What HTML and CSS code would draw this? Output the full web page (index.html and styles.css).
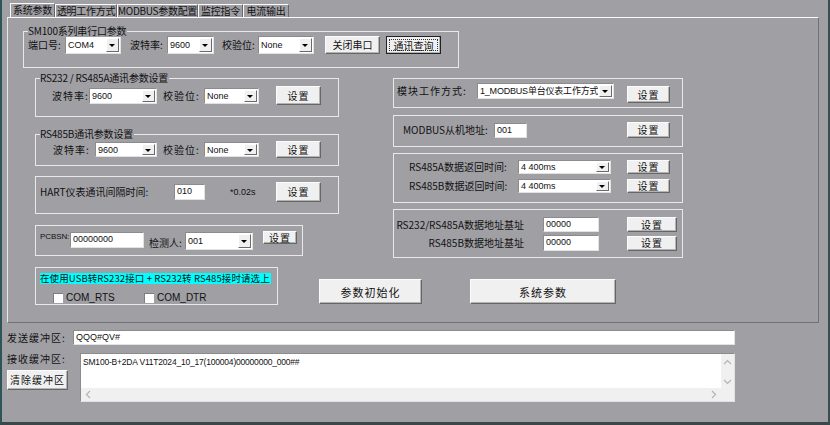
FILE: index.html
```html
<!DOCTYPE html>
<html lang="zh-CN">

<head>
    <meta charset="UTF-8">
    <title>SM100 参数设置</title>
    <link rel="stylesheet" href="styles.css">
</head>

<body>
    <div class="window">
        <div class="tabs">
            <div class="tab t1 active">系统参数</div>
            <div class="tab t2">透明工作方式</div>
            <div class="tab t3">MODBUS参数配置</div>
            <div class="tab t4">监控指令</div>
            <div class="tab t5">电流输出</div>
        </div>

        <div class="panel">
            <div class="group g-port">
                <span class="legend">SM100系列串行口参数</span>
                <div class="row">
                    <span class="lbl w37">端口号:</span>
                    <div class="combo w56 h18"><span class="val">COM4</span><span class="drop"></span></div>
                    <span class="lbl ml9 w37">波特率:</span>
                    <div class="combo w47 h18"><span class="val">9600</span><span class="drop"></span></div>
                    <span class="lbl ml8 w36">校验位:</span>
                    <div class="combo w56 h18"><span class="val">None</span><span class="drop"></span></div>
                    <button class="btn ml11 w55 h18">关闭串口</button>
                    <button class="btn focus ml6 w55 h18"><span>通讯查询</span></button>
                </div>
            </div>

            <div class="main">
                <div class="col-left">
                    <div class="group g-rs232">
                        <span class="legend">RS232 / RS485A通讯参数设置</span>
                        <div class="row">
                            <span class="lbl sp w37">波特率:</span>
                            <div class="combo w68 h16"><span class="val">9600</span><span class="drop"></span></div>
                            <span class="lbl sp ml6 w41">校验位:</span>
                            <div class="combo w55 h16"><span class="val">None</span><span class="drop"></span></div>
                            <button class="btn sp ml17 w45 h19">设置</button>
                        </div>
                    </div>

                    <div class="group g-485b">
                        <span class="legend">RS485B通讯参数设置</span>
                        <div class="row">
                            <span class="lbl sp w42">波特率:</span>
                            <div class="combo w62 h15"><span class="val">9600</span><span class="drop"></span></div>
                            <span class="lbl sp ml6 w41">校验位:</span>
                            <div class="combo w55 h15"><span class="val">None</span><span class="drop"></span></div>
                            <button class="btn sp ml17 w45 h17">设置</button>
                        </div>
                    </div>

                    <div class="group g-hart">
                        <div class="row">
                            <span class="lbl w134">HART仪表通讯间隔时间:</span>
                            <div class="edit w31 h16">010</div>
                            <span class="unit">*0.02s</span>
                            <button class="btn sp w45 h20">设置</button>
                        </div>
                    </div>

                    <div class="group g-pcb">
                        <div class="row top">
                            <span class="lbl w30 lat">PCBSN:</span>
                            <div class="edit w74 h16 mt1">00000000</div>
                            <span class="lbl ml5 w36 mt6">检测人:</span>
                            <div class="combo w68 h18 mt1"><span class="val">001</span><span class="drop"></span></div>
                            <button class="btn sp ml10 w34 h13">设置</button>
                        </div>
                    </div>
                </div>

                <div class="col-right">
                    <div class="group g-mode">
                        <div class="row top">
                            <span class="lbl sp w80 mt2">模块工作方式:</span>
                            <div class="combo w137 h16"><span class="val mode">1_MODBUS单台仪表工作方式</span><span class="drop"></span></div>
                            <button class="btn sp ml13 w43 h17 mt3">设置</button>
                        </div>
                    </div>

                    <div class="group g-slave">
                        <div class="row">
                            <span class="lbl w91">MODBUS从机地址:</span>
                            <div class="edit w33 h15">001</div>
                            <button class="btn sp ml100 w43 h16">设置</button>
                        </div>
                    </div>

                    <div class="group g-time">
                        <div class="row">
                            <span class="lbl w109">RS485A数据返回时间:</span>
                            <div class="combo w93 h14"><span class="val">4 400ms</span><span class="drop"></span></div>
                            <button class="btn sp ml16 w43 h14">设置</button>
                        </div>
                        <div class="row next">
                            <span class="lbl w109">RS485B数据返回时间:</span>
                            <div class="combo w93 h14"><span class="val">4 400ms</span><span class="drop"></span></div>
                            <button class="btn sp ml16 w43 h14">设置</button>
                        </div>
                    </div>

                    <div class="group g-base">
                        <div class="row">
                            <span class="lbl right w130">RS232/RS485A数据地址基址</span>
                            <div class="edit ml19 w56 h15">00000</div>
                            <button class="btn sp ml28 w50 h15">设置</button>
                        </div>
                        <div class="row next">
                            <span class="lbl right w130">RS485B数据地址基址</span>
                            <div class="edit ml19 w56 h16">00000</div>
                            <button class="btn sp ml28 w50 h15">设置</button>
                        </div>
                    </div>
                </div>
            </div>

            <div class="bottom-row">
                <div class="group g-chk">
                    <span class="hint">在使用USB转RS232接口 + RS232转 RS485接时请选上</span>
                    <div class="checks">
                        <span class="box"></span><span class="chk-text">COM_RTS</span>
                        <span class="box"></span><span class="chk-text">COM_DTR</span>
                    </div>
                </div>
                <button class="btn big sp btn-init">参数初始化</button>
                <button class="btn big sp btn-sys">系统参数</button>
            </div>
        </div>

        <div class="send">
            <span class="lbl sp w66">发送缓冲区:</span>
            <div class="edit w662 h15">QQQ#QV#</div>
        </div>

        <div class="recv">
            <div class="recv-left">
                <span class="lbl sp">接收缓冲区:</span>
                <button class="btn sp btn-clear">清除缓冲区</button>
            </div>
            <div class="memo">
                <div class="memo-text">SM100-B+2DA V11T2024_10_17(100004)00000000_000##</div>
                <div class="vbar">
                    <svg width="9" height="6" viewBox="0 0 9 6"><path d="M1 5 L4.5 1.5 L8 5" fill="none" stroke="#b4b4b4" stroke-width="1.2"/></svg>
                    <svg width="9" height="6" viewBox="0 0 9 6"><path d="M1 1 L4.5 4.5 L8 1" fill="none" stroke="#b4b4b4" stroke-width="1.2"/></svg>
                </div>
                <div class="hbar">
                    <svg width="6" height="9" viewBox="0 0 6 9"><path d="M5 1 L1.5 4.5 L5 8" fill="none" stroke="#b4b4b4" stroke-width="1.2"/></svg>
                    <svg width="6" height="9" viewBox="0 0 6 9"><path d="M1 1 L4.5 4.5 L1 8" fill="none" stroke="#b4b4b4" stroke-width="1.2"/></svg>
                </div>
                <div class="corner"></div>
            </div>
        </div>
    </div>
</body>

</html>
```

FILE: styles.css
```css
body {
    margin: 0;
    font-family: "Noto Sans CJK SC", sans-serif;
    font-size: 10px;
    color: #111;
}

.window {
    width: 830px;
    height: 425px;
    box-sizing: border-box;
    background-color: #a09fa4;
    border-left: 2px solid #2d5457;
    border-right: 2px solid #3b4d50;
    border-bottom: 3px solid #3a484b;
    overflow: hidden;
}

/* tabs */
.tabs {
    display: flex;
    height: 17px;
    box-sizing: border-box;
    padding: 4px 0 0 8px;
}

.tab {
    height: 13px;
    box-sizing: border-box;
    border-top: 1px solid #fafafa;
    border-left: 1px solid #fafafa;
    border-right: 1px solid #686868;
    text-align: center;
    line-height: 12px;
    font-size: 10px;
    white-space: nowrap;
    letter-spacing: -0.3px;
}

.t1 { width: 45px; }
.t2 { width: 62px; }
.t3 { width: 81px; }
.t4 { width: 45px; }
.t5 { width: 46px; }

.tab.active {
    height: 14px;
    margin-top: -1px;
}

.panel {
    margin-left: 5px;
    width: 812px;
    height: 306px;
    box-sizing: border-box;
    border-top: 1px solid #fafafa;
    border-left: 1px solid #e8e8e8;
    border-right: 1px solid #707070;
    border-bottom: 1px solid #707070;
}

/* group boxes */
.group {
    position: relative;
    box-sizing: border-box;
    border: 1px solid #e9e9e9;
}

.legend {
    position: absolute;
    top: -7px;
    left: 4px;
    padding: 0 1px 0 0;
    background-color: #a09fa4;
    line-height: 12px;
    font-size: 10px;
    letter-spacing: -0.2px;
}

.row {
    display: flex;
    align-items: center;
}

.row.top {
    align-items: flex-start;
}

.g-port {
    margin: 13px 0 0 15px;
    width: 436px;
    height: 37px;
}

.g-port .row { padding: 4px 0 0 4px; }

.main {
    display: flex;
    margin: 10px 0 0 27px;
}

.col-left {
    width: 304px;
}

.col-right {
    margin-left: 54px;
    width: 290px;
}

.g-rs232 { height: 39px; }
.g-rs232 .row { padding: 7px 0 0 16px; }

.g-485b { height: 32px; margin-top: 17px; }
.g-485b .row { padding: 6px 0 0 17px; }

.g-hart { height: 38px; margin-top: 10px; }
.g-hart .row { padding: 5px 0 0 4px; }

.g-pcb { height: 31px; width: 268px; margin-top: 11px; }
.g-pcb .row { padding: 5px 0 0 4px; }

.g-mode { height: 30px; }
.g-mode .row { padding: 4px 0 0 3px; }

.g-slave { height: 32px; margin-top: 7px; }
.g-slave .row { padding: 6px 0 0 9px; }

.g-time { height: 50px; margin-top: 6px; }
.g-time .row { padding-left: 15px; }
.g-time .row:first-child { padding-top: 6px; }
.g-time .row.next { margin-top: 5px; }

.g-base { height: 49px; margin-top: 6px; }
.g-base .row:first-child { padding-top: 7px; }
.g-base .row.next { margin-top: 3px; }

.bottom-row {
    display: flex;
    align-items: flex-start;
    margin: 9px 0 0 27px;
}

.g-chk {
    width: 243px;
    height: 38px;
    padding: 2px 0 0 4px;
}

.hint {
    display: inline-block;
    padding-right: 1px;
    height: 11px;
    line-height: 11px;
    background-color: #00ffff;
    white-space: nowrap;
    font-size: 9.5px;
    letter-spacing: 0.1px;
}

.checks {
    display: flex;
    align-items: center;
    margin-top: 7px;
    padding-left: 13px;
}

.box {
    width: 10px;
    height: 10px;
    box-sizing: border-box;
    background-color: #fff;
    border-top: 1px solid #7d7d7d;
    border-left: 1px solid #7d7d7d;
}

.chk-text {
    width: 78px;
    margin-left: 3px;
    font-family: "Liberation Sans", sans-serif;
    font-size: 10px;
}

/* controls */
.lbl {
    flex: none;
    line-height: 12px;
    white-space: nowrap;
}

.lbl.sp,
.btn.sp {
    letter-spacing: 1px;
}

.lbl.right {
    text-align: right;
}

.lat,
.unit,
.val,
.edit,
.memo-text {
    font-family: "Liberation Sans", sans-serif;
}

.lbl.lat {
    font-size: 8px;
    letter-spacing: -0.1px;
}

.unit {
    width: 46px;
    margin-left: 25px;
    font-size: 9px;
}

.edit,
.combo {
    flex: none;
    box-sizing: border-box;
    background-color: #fff;
    border: 1px solid;
    border-color: #8b8b8b #e2e2e2 #e2e2e2 #8b8b8b;
    font-size: 9px;
    line-height: 12px;
    padding-left: 2px;
    white-space: nowrap;
    overflow: hidden;
}

.combo {
    display: flex;
    align-items: stretch;
    padding-left: 0;
}

.combo .val {
    flex: 1;
    padding-left: 2px;
    overflow: hidden;
    display: flex;
    align-items: center;
    font-family: "Liberation Sans", "Noto Sans CJK SC", sans-serif;
}

.combo .val.mode {
    letter-spacing: -0.2px;
}

.drop {
    position: relative;
    width: 13px;
    margin: 1px;
    box-sizing: border-box;
    background-color: #f0f0f0;
    border: 1px solid;
    border-color: #fff #6a6a6a #6a6a6a #fff;
}

.drop::after {
    content: "";
    position: absolute;
    left: 2px;
    top: 50%;
    margin-top: -1px;
    border-left: 3px solid transparent;
    border-right: 3px solid transparent;
    border-top: 3px solid #000;
}

.btn {
    flex: none;
    box-sizing: border-box;
    padding: 0;
    background-color: #f0f0f0;
    border: 1px solid;
    border-color: #fcfcfc #666 #666 #fcfcfc;
    box-shadow: inset -1px -1px 0 #b4b4b4;
    font-family: "Noto Sans CJK SC", sans-serif;
    font-size: 10px;
    line-height: 10px;
    color: #111;
}

.btn.focus {
    border-color: #222;
    padding: 2px;
}

.btn.focus span {
    display: block;
    height: 100%;
    box-sizing: border-box;
    border: 1px dotted #333;
    line-height: 11px;
}

.btn.big {
    height: 25px;
    margin-top: 12px;
    font-size: 11px;
}

.btn-init { width: 103px; margin-left: 41px; }
.btn-sys { width: 146px; margin-left: 48px; }

/* sizes */
.w30 { width: 30px; }
.w31 { width: 31px; }
.w33 { width: 33px; }
.w34 { width: 34px; }
.w36 { width: 36px; }
.w37 { width: 37px; }
.w41 { width: 41px; }
.w42 { width: 42px; }
.w43 { width: 43px; }
.w45 { width: 45px; }
.w47 { width: 47px; }
.w50 { width: 50px; }
.w55 { width: 55px; }
.w56 { width: 56px; }
.w62 { width: 62px; }
.w66 { width: 66px; }
.w68 { width: 68px; }
.w74 { width: 74px; }
.w80 { width: 80px; }
.w91 { width: 91px; }
.w93 { width: 93px; }
.w109 { width: 109px; }
.w130 { width: 130px; }
.w134 { width: 134px; }
.w137 { width: 137px; }
.w662 { width: 662px; }

.h13 { height: 13px; }
.h14 { height: 14px; }
.h15 { height: 15px; }
.h16 { height: 16px; }
.h17 { height: 17px; }
.h18 { height: 18px; }
.h19 { height: 19px; }
.h20 { height: 20px; }

.ml5 { margin-left: 5px; }
.ml6 { margin-left: 6px; }
.ml8 { margin-left: 8px; }
.ml9 { margin-left: 9px; }
.ml10 { margin-left: 10px; }
.ml11 { margin-left: 11px; }
.ml13 { margin-left: 13px; }
.ml16 { margin-left: 16px; }
.ml17 { margin-left: 17px; }
.ml19 { margin-left: 19px; }
.ml28 { margin-left: 28px; }
.ml100 { margin-left: 100px; }

.mt1 { margin-top: 1px; }
.mt2 { margin-top: 2px; }
.mt3 { margin-top: 3px; }
.mt6 { margin-top: 6px; }

/* buffers */
.send {
    display: flex;
    align-items: center;
    margin: 7px 0 0 5px;
}

.recv {
    display: flex;
    margin: 8px 0 0 5px;
}

.recv-left {
    width: 73px;
    display: flex;
    flex-direction: column;
    align-items: flex-start;
}

.btn-clear {
    width: 61px;
    height: 20px;
    margin-top: 5px;
}

.memo {
    display: grid;
    grid-template-columns: 1fr 13px;
    grid-template-rows: 1fr 13px;
    width: 655px;
    height: 49px;
    box-sizing: border-box;
    background-color: #fff;
    border: 1px solid;
    border-color: #8b8b8b #e2e2e2 #e2e2e2 #8b8b8b;
}

.memo-text {
    padding: 2px 0 0 2px;
    font-size: 8.5px;
    letter-spacing: -0.2px;
    line-height: 12px;
    white-space: nowrap;
}

.vbar {
    display: flex;
    flex-direction: column;
    justify-content: space-between;
    align-items: center;
    padding: 5px 0 3px;
    background-color: #f0f0f0;
}

.hbar {
    display: flex;
    justify-content: space-between;
    align-items: center;
    padding: 0 4px;
    background-color: #f0f0f0;
}

.corner {
    background-color: #f0f0f0;
}
```
